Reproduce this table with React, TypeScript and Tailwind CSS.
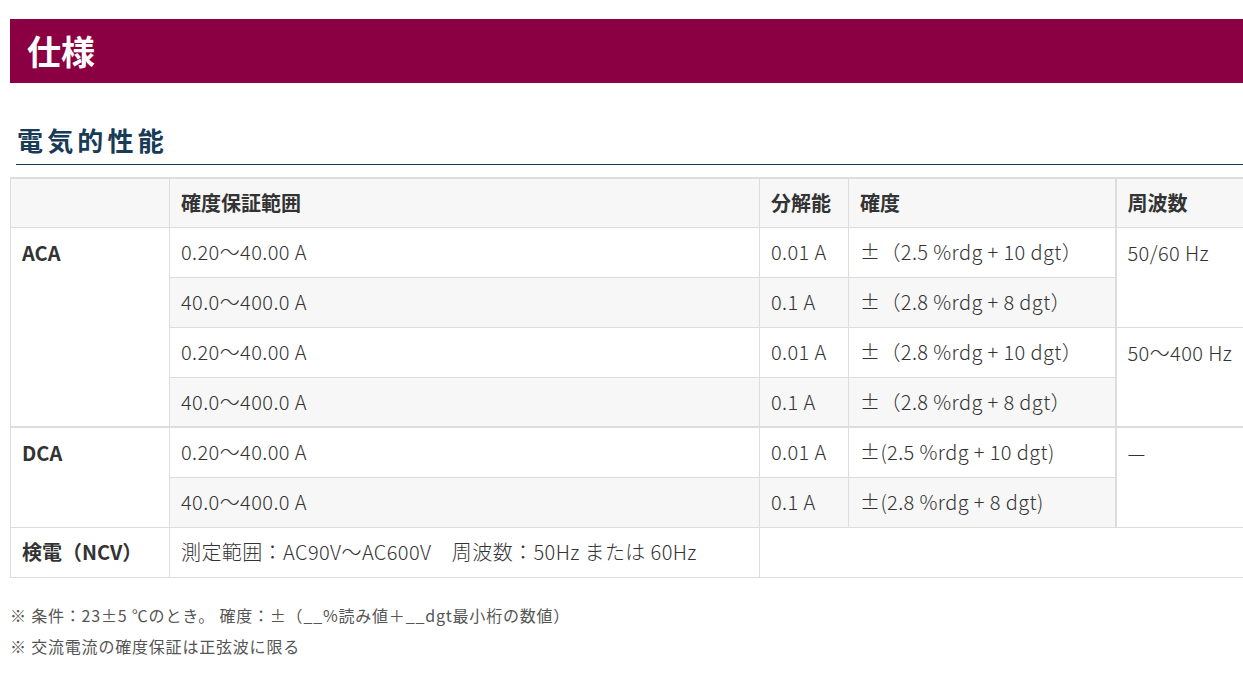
const font = { fontFamily: '"Noto Sans CJK JP", "Noto Sans", sans-serif' };

type Row = {
  label?: { text: string; span: number; groupEnd: boolean };
  range: string;
  res: string;
  acc: string;
  freq?: { text: string; span: number; groupEnd: boolean };
  shade: boolean;
  groupEnd?: boolean;
};

const ROWS: Row[] = [
  { label: { text: 'ACA', span: 4, groupEnd: true }, range: '0.20～40.00 A', res: '0.01 A', acc: '±（2.5 %rdg + 10 dgt）', freq: { text: '50/60 Hz', span: 2, groupEnd: false }, shade: false },
  { range: '40.0～400.0 A', res: '0.1 A', acc: '±（2.8 %rdg + 8 dgt）', shade: true },
  { range: '0.20～40.00 A', res: '0.01 A', acc: '±（2.8 %rdg + 10 dgt）', freq: { text: '50～400 Hz', span: 2, groupEnd: true }, shade: false },
  { range: '40.0～400.0 A', res: '0.1 A', acc: '±（2.8 %rdg + 8 dgt）', shade: true, groupEnd: true },
  { label: { text: 'DCA', span: 2, groupEnd: false }, range: '0.20～40.00 A', res: '0.01 A', acc: '±(2.5 %rdg + 10 dgt)', freq: { text: '—', span: 2, groupEnd: false }, shade: false },
  { range: '40.0～400.0 A', res: '0.1 A', acc: '±(2.8 %rdg + 8 dgt)', shade: true },
];

function SpecTable() {
  const base = 'h-[50px] px-[11px] align-middle border border-[#dddddd] text-[#333]';
  const cell = `${base} font-light tracking-[0.02em]`;
  const bold = `${base} font-bold`;
  const head = 'h-[49px] px-[11px] align-middle border border-[#dddddd] bg-[#f7f7f7] font-bold text-[#333] text-left';
  return (
    <table className="w-[1250px] table-fixed border-collapse border-t-2 border-t-[#dddddd] text-[20px] leading-none">
      <colgroup>
        <col className="w-[159px]" />
        <col className="w-[590px]" />
        <col className="w-[89px]" />
        <col className="w-[267px]" />
        <col className="w-[145px]" />
      </colgroup>
      <thead>
        <tr>
          <th className={head}></th>
          <th className={head}>確度保証範囲</th>
          <th className={head}>分解能</th>
          <th className={head}>確度</th>
          <th className={`${head} border-l-2`}>周波数</th>
        </tr>
      </thead>
      <tbody>
        {ROWS.map((r, i) => {
          const bg = r.shade ? 'bg-[#f7f7f7]' : 'bg-white';
          const bottom = r.groupEnd ? 'border-b-2' : '';
          return (
            <tr key={i}>
              {r.label && (
                <td rowSpan={r.label.span} className={`${bold} align-top pt-[15px] bg-white ${r.label.groupEnd ? 'border-b-2' : ''}`}>
                  {r.label.text}
                </td>
              )}
              <td className={`${cell} ${bg} ${bottom}`}>{r.range}</td>
              <td className={`${cell} ${bg} ${bottom}`}>{r.res}</td>
              <td className={`${cell} ${bg} ${bottom}`}>{r.acc}</td>
              {r.freq && (
                <td rowSpan={r.freq.span} className={`${cell} align-top pt-[15px] bg-white border-l-2 ${r.freq.groupEnd ? 'border-b-2' : ''}`}>
                  {r.freq.text}
                </td>
              )}
            </tr>
          );
        })}
        <tr>
          <td className={`${bold} bg-white`}>検電（NCV）</td>
          <td className={`${cell} bg-white`}>測定範囲：AC90V～AC600V　周波数：50Hz または 60Hz</td>
          <td colSpan={3} className={`${cell} bg-white`}></td>
        </tr>
      </tbody>
    </table>
  );
}

export default function App() {
  return (
    <div className="w-[1243px] h-[682px] overflow-hidden bg-white" style={font}>
      <div className="pt-[19px] pl-[10px]">
        <div className="h-[64px] w-[1250px] bg-[#8b0042] flex items-center pl-[17px]">
          <h1 className="text-[34px] font-bold text-white leading-none">仕様</h1>
        </div>
        <div className="mt-[40px] ml-[6px] w-[1250px] border-b border-[#1d3a52] pb-[7px]">
          <h2 className="pl-[1px] text-[26px] font-bold text-[#183b57] tracking-[0.16em] leading-[34px]">電気的性能</h2>
        </div>
        <div className="mt-[12px]">
          <SpecTable />
        </div>
        <div className="mt-[22px] text-[16px] leading-[31px] tracking-[0.05em] text-[#555]">
          <p>※ 条件：23±5 ℃のとき。 確度：±（<span>__</span>%読み値＋<span>__</span>dgt最小桁の数値）</p>
          <p>※ 交流電流の確度保証は正弦波に限る</p>
        </div>
      </div>
    </div>
  );
}
